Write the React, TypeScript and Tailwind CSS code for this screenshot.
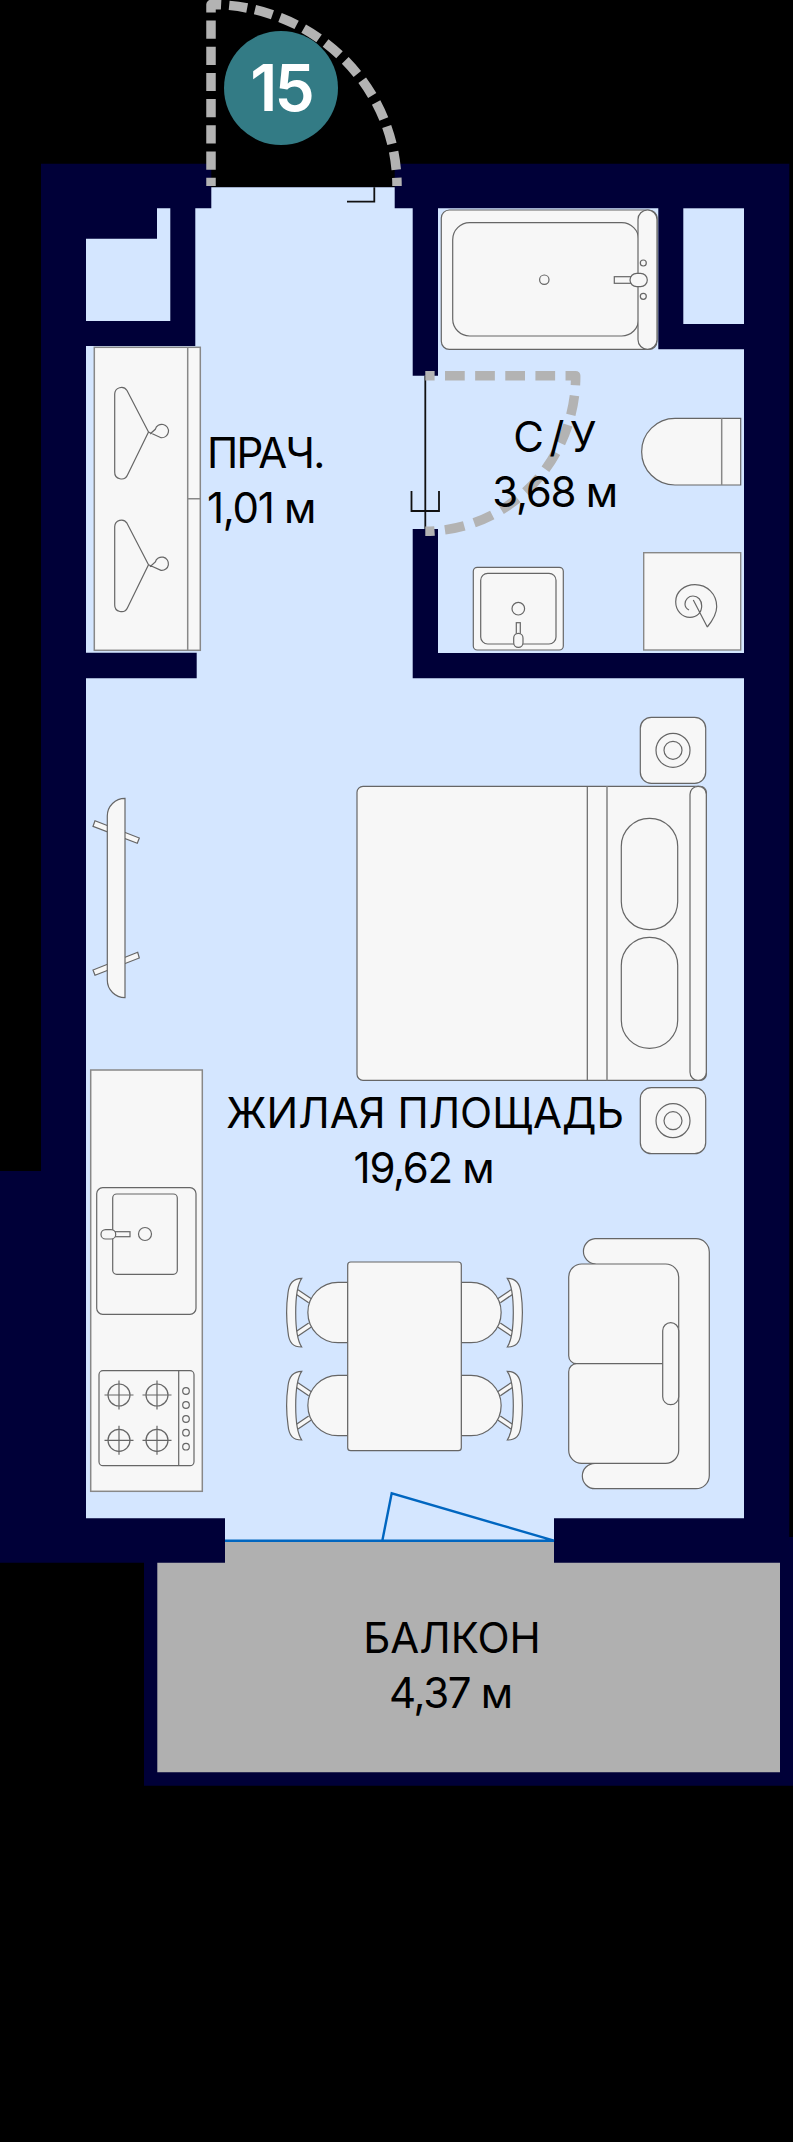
const WALL = '#000038';
const FLOOR = '#d4e6ff';
const FILL = '#f7f7f7';
const LINE = '#666666';
const DOOR = '#b3b3b3';

function Chair({ y, flip }: { y: number; flip?: boolean }) {
  return (
    <g transform={`${flip ? 'matrix(-1 0 0 1 809 0)' : ''} translate(0 ${y})`}>
      <path d="M296.7 1291.7 L310 1300.7 M296.7 1334 L310 1325" stroke={LINE} strokeWidth="6" />
      <path d="M296.7 1291.7 L310 1300.7 M296.7 1334 L310 1325" stroke={FILL} strokeWidth="3.5" />
      <path d="M347.7 1282.3 H338 A30.2 30.2 0 0 0 338 1342.7 H347.7 Z" fill={FILL} stroke={LINE} strokeWidth="1.2" />
      <path
        d="M301.7 1278.3 C297 1285 295.7 1298 295.7 1312.7 C295.7 1327 297 1340 301.7 1347 C293 1347 289 1343 288 1332 C286 1318 286 1307 288 1293 C289 1283 293 1278.3 301.7 1278.3 Z"
        fill={FILL}
        stroke={LINE}
        strokeWidth="1.2"
      />
    </g>
  );
}

function Hanger({ y }: { y: number }) {
  return (
    <g transform={`translate(0 ${y})`} fill="none" stroke={LINE} strokeWidth="1.2">
      <path d="M114.7 394 A6.7 6.7 0 0 1 127 390.5 L148.5 432 L127.5 475 A6.7 6.7 0 0 1 114.7 472 Z" />
      <path d="M148.5 432 L161 437.7 A6.7 6.7 0 1 0 155.3 429.3 L150 434" />
    </g>
  );
}

function Nightstand({ y }: { y: number }) {
  return (
    <g>
      <rect x="640.3" y={y} width="65.4" height="66" rx="11" fill={FILL} stroke={LINE} strokeWidth="1.2" />
      <circle cx="673" cy={y + 33} r="17" fill="none" stroke={LINE} strokeWidth="1.2" />
      <circle cx="673" cy={y + 33} r="9" fill="none" stroke={LINE} strokeWidth="1.2" />
    </g>
  );
}

function Plan() {
  const burners = [
    [119, 1395],
    [157, 1395],
    [119, 1440.3],
    [157, 1440.3],
  ];
  return (
    <svg width="793" height="2142" viewBox="0 0 793 2142" className="absolute inset-0">
      <path d="M41 163.7 H211.3 V187.3 H394.7 V163.7 H789.3 V1537 H793 V1785.7 H144 V1562.7 H0 V1171 H41 Z" fill={WALL} />
      <path
        d="M211.3 187.3 H394.7 V208.3 H412.7 V375.7 H438 V208.3 H658.3 V349.3 H744 V653 H438 V529 H412.7 V678.3 H744 V1518.3 H554 V1541 H225 V1518.3 H86 V678.3 H196.7 V652.7 H86 V346 H195.3 V208.3 H211.3 Z"
        fill={FLOOR}
      />
      <path d="M170.3 208.3 V321 H86 V238.7 H157 V208.3 Z" fill={FLOOR} />
      <rect x="683.3" y="208.3" width="60.7" height="115.7" fill={FLOOR} />
      <path d="M157.3 1562.7 H225 V1541 H554 V1562.7 H780 V1772.3 H157.3 Z" fill="#b0b0b0" />

      {/* entrance door */}
      <path d="M347 201.7 H374.3 V187.3" fill="none" stroke="#111" strokeWidth="1.8" />
      <path
        d="M211 186 V4.5 A186 181.5 0 0 1 397 186"
        fill="none"
        stroke={DOOR}
        strokeWidth="9.5"
        strokeLinejoin="round"
        strokeDasharray="18.2 8"
        strokeDashoffset="9.9"
      />

      {/* bathroom door */}
      <path d="M425.3 375.7 V529 M411.5 491 V511 H439 V491" fill="none" stroke="#111" strokeWidth="1.8" />
      <path
        d="M425.3 375.7 H575.7 A150.4 155.5 0 0 1 425.3 531.2"
        fill="none"
        stroke={DOOR}
        strokeWidth="9.5"
        strokeLinejoin="round"
        strokeDasharray="19.7 10.43"
        strokeDashoffset="10.4"
      />

      {/* bath */}
      <g stroke={LINE} strokeWidth="1.2" fill={FILL}>
        <rect x="441.3" y="210" width="215.7" height="139.3" rx="8" />
        <rect x="452.7" y="222.7" width="186" height="113.3" rx="17" />
        <rect x="638" y="210" width="19" height="139.3" rx="9.5" />
        <circle cx="544.3" cy="279.7" r="4.7" />
        <rect x="614.3" y="276.7" width="16.4" height="6.6" />
        <rect x="630" y="273.3" width="17.3" height="13.4" rx="6.7" />
        <circle cx="643.3" cy="263" r="3" />
        <circle cx="643.3" cy="296.3" r="3" />
      </g>

      {/* toilet */}
      <path d="M721.7 418.3 H675 A33.3 33.3 0 0 0 675 485 H740.7 V418.3 Z" fill={FILL} stroke={LINE} strokeWidth="1.2" />
      <path d="M721.7 418.3 V485" stroke="#888" strokeWidth="1.5" />

      {/* washbasin */}
      <g stroke={LINE} strokeWidth="1.2" fill={FILL}>
        <rect x="473.3" y="567.3" width="90" height="82.7" rx="4" />
        <rect x="480.7" y="573.3" width="75.3" height="70.7" rx="7" />
        <circle cx="518.3" cy="608.7" r="6.3" />
        <rect x="516.3" y="622.7" width="4" height="11.3" />
        <rect x="513.7" y="633.3" width="9.3" height="14" rx="4.6" />
      </g>

      {/* washing machine */}
      <rect x="643.7" y="552.7" width="97" height="97.3" fill={FILL} stroke="#888" strokeWidth="1.4" />
      <path
        d="M707.3 627 C713 620 716.7 614 716.7 606.7 C716.7 594 707 584.7 695 584.7 C684 584.7 675.7 592 675.7 601.7 C675.7 610.5 682 617.3 690 617.3 C697 617.3 701.7 612.5 701.7 606 C701.7 600 698 596 693 596 C688.5 596 685 599.5 685 604 C685 607 687 609 689 610 M693.3 600 L707.3 627"
        fill="none"
        stroke={LINE}
        strokeWidth="1.2"
      />

      {/* laundry wardrobe */}
      <rect x="94.3" y="347.3" width="106" height="303" fill={FILL} stroke="#888" strokeWidth="1.5" />
      <path d="M187.7 347.3 V650.3 M187.7 498.7 H200.3" stroke="#888" strokeWidth="1.5" />
      <Hanger y={0} />
      <Hanger y={132.7} />

      {/* bed */}
      <Nightstand y={717.3} />
      <Nightstand y={1087.7} />
      <rect x="357" y="786.3" width="349.3" height="294" rx="6" fill={FILL} stroke={LINE} strokeWidth="1.2" />
      <path d="M587.3 786.3 V1080.3" stroke={LINE} strokeWidth="1.2" />
      <path d="M607 786.3 V1080.3" stroke="#888" strokeWidth="1.6" />
      <rect x="690" y="786.3" width="16.3" height="294" rx="8" fill={FILL} stroke={LINE} strokeWidth="1.2" />
      <rect x="621.3" y="818.3" width="56.4" height="111.4" rx="28" fill={FILL} stroke={LINE} strokeWidth="1.2" />
      <rect x="621.3" y="937.3" width="56.4" height="111" rx="28" fill={FILL} stroke={LINE} strokeWidth="1.2" />

      {/* tv */}
      <g fill={FILL} stroke={LINE} strokeWidth="1.2">
        <path d="M95 820.7 L93 826.3 L137.3 843.3 L139.3 838 Z" />
        <path d="M93 970 L95 975.3 L139.3 958 L137.7 952.3 Z" />
        <path d="M125 798.3 V997.7 A17.7 17.7 0 0 1 107.3 980 V816 A17.7 17.7 0 0 1 125 798.3 Z" />
      </g>

      {/* kitchen */}
      <rect x="90.7" y="1070" width="111.6" height="421.3" fill={FILL} stroke="#888" strokeWidth="1.5" />
      <g stroke={LINE} strokeWidth="1.2" fill={FILL}>
        <rect x="96.7" y="1187.7" width="99.3" height="126.6" rx="6" />
        <rect x="112.7" y="1194" width="64.6" height="80.3" rx="4" />
        <circle cx="145" cy="1234" r="6.5" />
        <rect x="115" y="1231.7" width="15" height="5" />
        <rect x="101" y="1229.7" width="14.7" height="9.3" rx="4.6" />
        <rect x="99" y="1370.7" width="95" height="95" rx="4" />
        <path d="M178.7 1370.7 V1465.7" />
        {burners.map(([cx, cy]) => (
          <g key={`${cx}-${cy}`} fill="none">
            <circle cx={cx} cy={cy} r="11" />
            <path d={`M${cx - 14.5} ${cy} H${cx + 14.5} M${cx} ${cy - 14.5} V${cy + 14.5}`} />
          </g>
        ))}
        {[1391, 1405, 1419, 1432.7, 1446.7].map((cy) => (
          <circle key={cy} cx="186" cy={cy} r="3.3" fill="none" />
        ))}
      </g>

      {/* dining */}
      <Chair y={0} />
      <Chair y={93} />
      <Chair y={0} flip />
      <Chair y={93} flip />
      <rect x="347.7" y="1262" width="113.6" height="188.7" rx="3" fill={FILL} stroke={LINE} strokeWidth="1.2" />

      {/* sofa */}
      <path
        d="M595 1264 A12.7 12.7 0 0 1 595 1238.7 H696 A13.3 13.3 0 0 1 709.3 1252 V1475.4 A13.3 13.3 0 0 1 696 1488.7 H595 A12.7 12.7 0 0 1 595 1463.3 Z"
        fill={FILL}
        stroke={LINE}
        strokeWidth="1.2"
      />
      <path
        d="M582 1264 H665.7 A13 13 0 0 1 678.7 1277 V1450.3 A13 13 0 0 1 665.7 1463.3 H582 A13 13 0 0 1 568.7 1450.3 V1372 A8 8 0 0 1 577 1363.7 A8 8 0 0 1 568.7 1355.4 V1277 A13 13 0 0 1 582 1264 Z"
        fill={FILL}
        stroke={LINE}
        strokeWidth="1.2"
      />
      <path d="M577 1363.7 H662.7" stroke={LINE} strokeWidth="1.2" />
      <rect x="662.7" y="1322.7" width="16" height="82" rx="8" fill={FILL} stroke={LINE} strokeWidth="1.2" />

      {/* balcony door */}
      <path d="M225 1540.7 H554 L391.7 1493.3 L382.3 1540.7" fill="none" stroke="#0066c0" strokeWidth="2.4" />
    </svg>
  );
}

function Label({ title, area, className, titleClass }: { title: string; area: string; className: string; titleClass?: string }) {
  return (
    <div className={`absolute flex flex-col text-[42px] leading-[55px] text-black ${className}`}>
      <span className={`whitespace-pre ${titleClass ?? ''}`}>{title}</span>
      <span className="whitespace-pre tracking-[-1.3px] mr-[3px]">{area}</span>
    </div>
  );
}

export default function App() {
  return (
    <div className="relative h-[2142px] w-[793px] overflow-hidden bg-black font-['Inter',sans-serif]">
      <Plan />
      <div className="absolute left-[224px] top-[31px] flex h-[114px] w-[114px] items-center justify-center rounded-full bg-[#337b85] text-[64px] font-semibold tracking-[-3px] text-white">
        15
      </div>
      <Label title="ПРАЧ." area="1,01 м" className="left-[207px] top-[425px] items-start" titleClass="tracking-[-1.8px]" />
      <Label title="С/У" area="3,68 м" className="left-[456px] top-[409px] w-[200px] items-center" titleClass="tracking-[5.5px] ml-[3px]" />
      <Label title="ЖИЛАЯ ПЛОЩАДЬ" area="19,62 м" className="left-[175px] top-[1085px] w-[500px] items-center" />
      <Label title="БАЛКОН" area="4,37 м" className="left-[352px] top-[1610px] w-[200px] items-center" />
    </div>
  );
}
